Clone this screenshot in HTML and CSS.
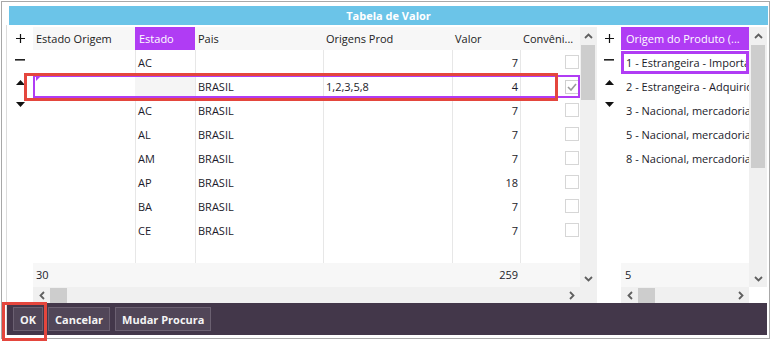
FILE: index.html
```html
<!DOCTYPE html>
<html>
<head>
<meta charset="utf-8">
<link rel="stylesheet" href="styles.css">
</head>
<body>
<div class="window">
  <div class="title">Tabela de Valor</div>
  <div class="panel">
    <div class="grids">
      <div class="ctrl">
        <div class="cbtn"><svg width="9" height="9" viewBox="0 0 9 9"><path d="M4.5 0V9M0 4.5H9" stroke="#111" stroke-width="1.2"/></svg></div>
        <div class="cbtn"><svg width="10" height="2" viewBox="0 0 10 2"><rect width="10" height="1.6" fill="#222"/></svg></div>
        <div class="cbtn"><svg width="9" height="5" viewBox="0 0 9 5"><path d="M4.5 0L9 5H0z" fill="#111"/></svg></div>
        <div class="cbtn"><svg width="9" height="5" viewBox="0 0 9 5"><path d="M0 0H9L4.5 5z" fill="#111"/></svg></div>
      </div>
      <div class="grid grid-main">
        <div class="ghead cols-main">
          <div class="hc">Estado Origem</div>
          <div class="hc hsel">Estado</div>
          <div class="hc">Pais</div>
          <div class="hc">Origens Prod</div>
          <div class="hc">Valor</div>
          <div class="hc">Convêni...</div>
        </div>
        <div class="vscroll">
          <div class="arr"><svg width="9" height="6" viewBox="0 0 9 6"><path d="M1 5L4.5 1.5L8 5" stroke="#5f5f5f" stroke-width="1.8" fill="none"/></svg></div>
          <div class="thumb thumb-main"></div>
          <div class="fill"></div>
          <div class="arr"><svg width="9" height="6" viewBox="0 0 9 6"><path d="M1 1L4.5 4.5L8 1" stroke="#5f5f5f" stroke-width="1.8" fill="none"/></svg></div>
        </div>
        <div class="gbody body-main">
          <div class="row cols-main"><div></div><div>AC</div><div></div><div></div><div class="num">7</div><div class="chk"><span class="box"></span></div></div>
          <div class="row cols-main sel"><div class="edit"><span class="corner-mark"></span></div><div class="grey"></div><div>BRASIL</div><div>1,2,3,5,8</div><div class="num">4</div><div class="chk"><span class="box on"><svg width="10" height="8" viewBox="0 0 10 8"><path d="M1 4L4 7L9 1" stroke="#9a9a9a" stroke-width="1.6" fill="none"/></svg></span></div></div>
          <div class="row cols-main"><div></div><div>AC</div><div>BRASIL</div><div></div><div class="num">7</div><div class="chk"><span class="box"></span></div></div>
          <div class="row cols-main"><div></div><div>AL</div><div>BRASIL</div><div></div><div class="num">7</div><div class="chk"><span class="box"></span></div></div>
          <div class="row cols-main"><div></div><div>AM</div><div>BRASIL</div><div></div><div class="num">7</div><div class="chk"><span class="box"></span></div></div>
          <div class="row cols-main"><div></div><div>AP</div><div>BRASIL</div><div></div><div class="num">18</div><div class="chk"><span class="box"></span></div></div>
          <div class="row cols-main"><div></div><div>BA</div><div>BRASIL</div><div></div><div class="num">7</div><div class="chk"><span class="box"></span></div></div>
          <div class="row cols-main"><div></div><div>CE</div><div>BRASIL</div><div></div><div class="num">7</div><div class="chk"><span class="box"></span></div></div>
        </div>
        <div class="gfoot cols-main">
          <div>30</div><div></div><div></div><div></div><div class="num">259</div><div></div>
        </div>
        <div class="hscroll">
          <div class="arr"><svg width="6" height="9" viewBox="0 0 6 9"><path d="M5 1L1.5 4.5L5 8" stroke="#5f5f5f" stroke-width="1.8" fill="none"/></svg></div>
          <div class="hthumb"></div>
          <div class="fill"></div>
          <div class="arr"><svg width="6" height="9" viewBox="0 0 6 9"><path d="M1 1L4.5 4.5L1 8" stroke="#5f5f5f" stroke-width="1.8" fill="none"/></svg></div>
        </div>
        <div class="corner"></div>
      </div>
      <div class="ctrl ctrl-r">
        <div class="cbtn"><svg width="9" height="9" viewBox="0 0 9 9"><path d="M4.5 0V9M0 4.5H9" stroke="#111" stroke-width="1.2"/></svg></div>
        <div class="cbtn"><svg width="10" height="2" viewBox="0 0 10 2"><rect width="10" height="1.6" fill="#222"/></svg></div>
        <div class="cbtn"><svg width="9" height="5" viewBox="0 0 9 5"><path d="M4.5 0L9 5H0z" fill="#111"/></svg></div>
        <div class="cbtn"><svg width="9" height="5" viewBox="0 0 9 5"><path d="M0 0H9L4.5 5z" fill="#111"/></svg></div>
      </div>
      <div class="grid grid-side">
        <div class="ghead">
          <div class="hc hsel">Origem do Produto (...</div>
        </div>
        <div class="vscroll">
          <div class="arr"><svg width="9" height="6" viewBox="0 0 9 6"><path d="M1 5L4.5 1.5L8 5" stroke="#5f5f5f" stroke-width="1.8" fill="none"/></svg></div>
          <div class="thumb thumb-side"></div>
          <div class="fill"></div>
          <div class="arr"><svg width="9" height="6" viewBox="0 0 9 6"><path d="M1 1L4.5 4.5L8 1" stroke="#5f5f5f" stroke-width="1.8" fill="none"/></svg></div>
        </div>
        <div class="gbody">
          <div class="row srow sel">1 - Estrangeira - Importação direta</div>
          <div class="row srow">2 - Estrangeira - Adquirida no mercado interno</div>
          <div class="row srow">3 - Nacional, mercadoria ou bem</div>
          <div class="row srow">5 - Nacional, mercadoria ou bem</div>
          <div class="row srow">8 - Nacional, mercadoria ou bem</div>
        </div>
        <div class="gfoot">
          <div>5</div>
        </div>
        <div class="hscroll">
          <div class="arr"><svg width="6" height="9" viewBox="0 0 6 9"><path d="M5 1L1.5 4.5L5 8" stroke="#5f5f5f" stroke-width="1.8" fill="none"/></svg></div>
          <div class="hthumb"></div>
          <div class="fill"></div>
          <div class="arr"><svg width="6" height="9" viewBox="0 0 6 9"><path d="M1 1L4.5 4.5L1 8" stroke="#5f5f5f" stroke-width="1.8" fill="none"/></svg></div>
        </div>
        <div class="corner corner-w"></div>
      </div>
    </div>
    <div class="toolbar">
      <button class="btn">OK</button>
      <button class="btn">Cancelar</button>
      <button class="btn">Mudar Procura</button>
    </div>
  </div>
</div>
<div class="mark mark-row"></div>
<div class="mark mark-ok"></div>
</body>
</html>
```
FILE: styles.css
```css
* { box-sizing: border-box; }
html, body { margin: 0; padding: 0; }
body {
  position: relative;
  width: 771px;
  height: 342px;
  overflow: hidden;
  background: #fff;
  font-family: "Open Sans", "Noto Sans", sans-serif;
  font-size: 11px;
  color: #1b1b2a;
}
.window {
  margin: 1px;
  width: 769px;
  height: 338px;
  border: 1px solid #a8a8a8;
}
.title {
  margin: 4px 1px 0 7px;
  height: 19px;
  line-height: 19px;
  background: #6bc4e8;
  color: #fff;
  font-weight: bold;
  text-align: center;
}
.panel {
  margin-left: 4px;
  width: 761px;
  border-left: 1px solid #dcdcdc;
}
.grids {
  display: flex;
  height: 278px;
  padding-top: 2px;
}
.ctrl {
  width: 26px;
  display: flex;
  flex-direction: column;
}
.ctrl-r { width: 24px; }
.cbtn {
  height: 22px;
  display: flex;
  align-items: center;
  justify-content: center;
}
.grid { display: grid; }
.grid-main {
  grid-template-columns: 547px 17px;
  grid-template-rows: 23px 213px 24px 16px;
}
.grid-side {
  grid-template-columns: 128px 18px;
  grid-template-rows: 23px 213px 24px 16px;
}
.cols-main {
  display: grid;
  grid-template-columns: 102px 60px 128px 129px 68px 60px;
}
.ghead {
  grid-column: 1;
  grid-row: 1;
  background: #f7f7f7;
  color: #222;
}
.hc {
  padding-left: 3px;
  line-height: 23px;
  white-space: nowrap;
  overflow: hidden;
}
.hsel {
  background: #b03cf4;
  color: #fff;
  padding-left: 4px;
}
.grid-side .hc { padding-left: 5px; }
.vscroll {
  grid-column: 2;
  grid-row: 1 / 4;
  background: #f0f0f0;
  display: flex;
  flex-direction: column;
}
.arr {
  flex: 0 0 17px;
  display: flex;
  align-items: center;
  justify-content: center;
}
.fill { flex: 1; }
.thumb {
  margin: 1px 2px 0 1px;
  background: #cdcdcd;
}
.thumb-main { height: 55px; }
.thumb-side { height: 123px; margin: 1px 2px 0 2px; }
.gbody {
  grid-column: 1;
  grid-row: 2;
  background-color: #fff;
  overflow: hidden;
}
.body-main {
  background-image:
    linear-gradient(#e7e7e7, #e7e7e7),
    linear-gradient(#e7e7e7, #e7e7e7),
    linear-gradient(#e7e7e7, #e7e7e7),
    linear-gradient(#e7e7e7, #e7e7e7),
    linear-gradient(#e7e7e7, #e7e7e7);
  background-size: 1px 100%;
  background-repeat: no-repeat;
  background-position: 102px 0, 162px 0, 290px 0, 419px 0, 487px 0;
}
.row {
  height: 24px;
  align-items: center;
  white-space: nowrap;
}
.row > div {
  padding: 0 3px 0 3px;
  overflow: hidden;
}
.num { text-align: right; padding-right: 2px !important; }
.chk {
  display: flex;
  justify-content: flex-end;
  padding-right: 1px !important;
}
.box {
  width: 14px;
  height: 14px;
  border: 1px solid #d6d6d6;
  background: #fff;
  display: flex;
  align-items: center;
  justify-content: center;
}
.box.on { border-color: #cfcfcf; }
.sel {
  margin-top: 1px;
  height: 23px;
  outline: 2px solid #b03cf4;
  outline-offset: -2px;
}
.row.sel > div { align-self: stretch; display: flex; align-items: center; }
.row.sel > .num { justify-content: flex-end; }
.grey { background: #f5f5f5; }
.edit { position: relative; }
.corner-mark {
  position: absolute;
  left: 3px;
  top: 2px;
  width: 0;
  height: 0;
  border-top: 4px solid #b03cf4;
  border-right: 4px solid transparent;
}
.srow {
  display: flex;
  padding-left: 5px;
  overflow: hidden;
}
.grid-side .sel { outline-width: 3px; outline-offset: -3px; }
.gfoot {
  grid-column: 1;
  grid-row: 3;
  background: #f7f7f7;
  line-height: 24px;
}
.gfoot > div { padding: 0 3px; }
.grid-side .gfoot > div { padding-left: 4px; }
.hscroll {
  grid-column: 1;
  grid-row: 4;
  background: #f0f0f0;
  display: flex;
  align-items: center;
}
.hthumb {
  width: 17px;
  height: 15px;
  background: #cdcdcd;
}
.corner { grid-column: 2; grid-row: 4; background: #f0f0f0; }
.corner-w { background: #fff; }
.toolbar {
  height: 32px;
  background: #43374a;
  display: flex;
  align-items: center;
  padding-left: 6px;
}
.btn {
  height: 24px;
  margin-right: 5px;
  padding: 0 6px;
  background: #514658;
  border: 1px solid #6b6071;
  color: #f4f4f4;
  font-family: "Open Sans", "Noto Sans", sans-serif;
  font-size: 11px;
  font-weight: bold;
}
.mark {
  position: absolute;
  border: 3px solid #e4463d;
}
.mark-row { left: 24px; top: 73px; width: 534px; height: 28px; }
.mark-ok { left: 2px; top: 302px; width: 45px; height: 39px; }
```
